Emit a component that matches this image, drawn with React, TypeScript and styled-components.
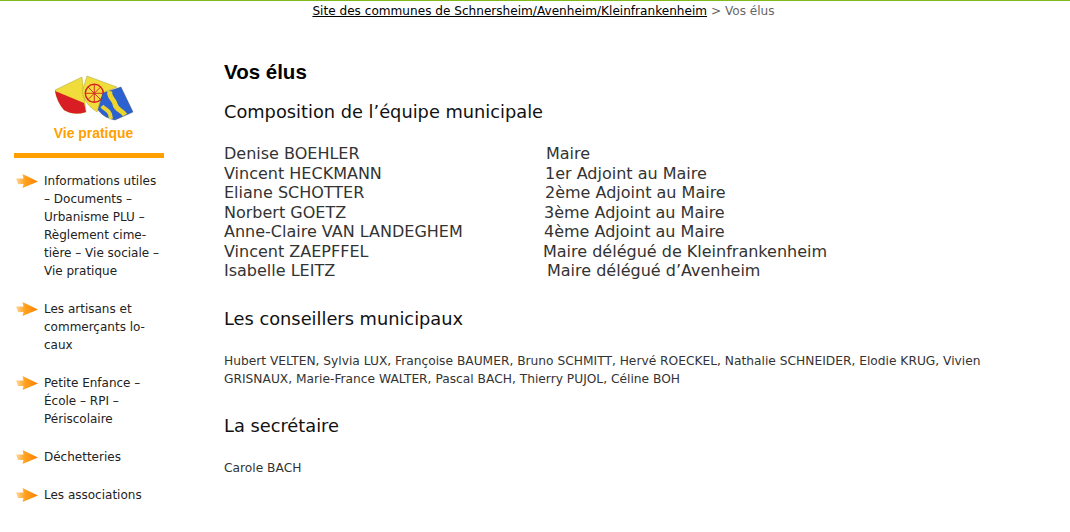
import React from "react";
import styled, { createGlobalStyle } from "styled-components";

const Global = createGlobalStyle`
  html, body { margin: 0; padding: 0; background: #fff; overflow: hidden; }
  body { font-family: "DejaVu Sans", Verdana, sans-serif; color: #222; }
`;
const Page = styled.div`width:1070px;height:532px;overflow:hidden;border-top:1px solid #7fba1a;`;
const Crumbs = styled.div`height:20px;line-height:20px;text-align:center;font-size:12.1px;color:#666;padding-left:17px;`;
const CrumbLink = styled.a`color:#000;text-decoration:underline;`;
const Layout = styled.div`display:grid;grid-template-columns:164px 1fr;column-gap:60px;`;
const Sidebar = styled.aside`padding:51px 0 0 14px;width:150px;`;
const Logo = styled.div`display:flex;flex-direction:column;align-items:center;height:81px;padding-left:9px;border-bottom:5px solid #ff9f00;`;
const LogoArt = styled.svg`margin-left:3px;`;
const LogoTitle = styled.div`font:bold 13.9px/16px "Liberation Sans",sans-serif;color:#ff9f00;margin-top:1px;`;
const Menu = styled.ul`list-style:none;margin:14px 0 0;padding:0;`;
const Item = styled.li`display:flex;gap:6px;font-size:12px;line-height:18px;margin-bottom:20px;color:#222;`;
const ItemText = styled.span`width:120px;flex:none;`;
const Main = styled.main`padding-top:36px;`;
const H1 = styled.h1`font:bold 20.5px "Liberation Sans",sans-serif;margin:0;color:#000;line-height:30px;`;
const H2 = styled.h2<{$top:number}>`font-weight:normal;font-size:17.8px;line-height:24px;color:#111;margin:${p=>p.$top}px 0 0;`;
const Team = styled.div`margin-top:20px;font-size:16px;line-height:19.5px;color:#333;`;
const Row = styled.div`display:flex;white-space:nowrap;`;
const Name = styled.span<{$w:number}>`width:${p=>p.$w}px;flex:none;`;
const Small = styled.p`font-size:12.24px;line-height:18px;color:#333;margin:21px 0 0;width:780px;`;
const ArrowIcon = styled.svg`flex:none;margin-top:1px;`;

const Arrow = () => (
  <ArrowIcon width="24" height="16" viewBox="0 0 24 16">
    <defs>
      <linearGradient id="arrowFill" x1="0" x2="1" y1="0" y2="0">
        <stop offset="0" stopColor="#ffd9a0"/>
        <stop offset="0.4" stopColor="#ffa320"/>
        <stop offset="1" stopColor="#ff7d00"/>
      </linearGradient>
    </defs>
    <path d="M2 5.5 L9.5 5.5 L8.5 1 L24 8.5 L8.5 15 L9.5 11 L4 11 Z" fill="url(#arrowFill)"/>
  </ArrowIcon>
);
const Shields = () => (
  <LogoArt width="90" height="52" viewBox="50 72 90 52">
    <path d="M55 90 L82 77 L86 112 Q74 116 64 110 Q57 102 55 90Z" fill="#f0dc3a" stroke="#9a8f2a" strokeWidth=".4"/>
    <path d="M55 91 L84 103 L86 112 Q74 116 64 110 Q57 102 55 91Z" fill="#d81e24"/>
    <path d="M87 76 L117 87 L103 93 L97 112 Q85 105 82 92Z" fill="#f0dc3a" stroke="#9a8f2a" strokeWidth=".4"/>
    <circle cx="94.3" cy="93.3" r="9" fill="none" stroke="#d42020" strokeWidth="1.4"/>
    <path d="M94.3 84.3V102.3M85.3 93.3H103.3M88 87L100.6 99.6M100.6 87L88 99.6" stroke="#d42020" strokeWidth=".9"/>
    <path d="M121 87 L133 112 L115 120 Q104 118 98 110 L103 93Z" fill="#2b62cf" stroke="#445" strokeWidth=".4"/>
    <path d="M110 91 C108 97 114 99 115 104 C116 110 122 110 125 115" stroke="#eed52c" strokeWidth="5" fill="none"/>
    <path d="M102 106 C105 110 108 109 110 114 L111 119" stroke="#eed52c" strokeWidth="4" fill="none"/>
  </LogoArt>
);
const menu = [
  "Informations utiles – Documents – Urbanisme PLU – Règlement cime\u00adtière – Vie sociale – Vie pratique",
  "Les artisans et commerçants lo\u00adcaux",
  "Petite Enfance – École – RPI – Périscolaire",
  "Déchetteries",
  "Les associations",
];
const team: [string,string,number][] = [
  ["Denise BOEHLER","Maire",322],
  ["Vincent HECKMANN","1er Adjoint au Maire",321],
  ["Eliane SCHOTTER","2ème Adjoint au Maire",321],
  ["Norbert GOETZ","3ème Adjoint au Maire",320],
  ["Anne-Claire VAN LANDEGHEM","4ème Adjoint au Maire",320],
  ["Vincent ZAEPFFEL","Maire délégué de Kleinfrankenheim",319],
  ["Isabelle LEITZ","Maire délégué d’Avenheim",323],
];
export default function App(){
  return <Page><Global/>
    <Crumbs><CrumbLink>Site des communes de Schnersheim/Avenheim/Kleinfrankenheim</CrumbLink> &gt; Vos élus</Crumbs>
    <Layout>
      <Sidebar>
        <Logo><Shields/><LogoTitle>Vie pratique</LogoTitle></Logo>
        <Menu>{menu.map(m=><Item key={m}><Arrow/><ItemText>{m}</ItemText></Item>)}</Menu>
      </Sidebar>
      <Main>
        <H1>Vos élus</H1>
        <H2 $top={13}>Composition de l’équipe municipale</H2>
        <Team>{team.map(([n,r,w])=><Row key={n}><Name $w={w}>{n}</Name><span>{r}</span></Row>)}</Team>
        <H2 $top={26}>Les conseillers municipaux</H2>
        <Small>Hubert VELTEN, Sylvia LUX, Françoise BAUMER, Bruno SCHMITT, Hervé ROECKEL, Nathalie SCHNEIDER, Elodie KRUG, Vivien GRISNAUX, Marie-France WALTER, Pascal BACH, Thierry PUJOL, Céline BOH</Small>
        <H2 $top={26}>La secrétaire</H2>
        <Small>Carole BACH</Small>
      </Main>
    </Layout>
  </Page>;
}
